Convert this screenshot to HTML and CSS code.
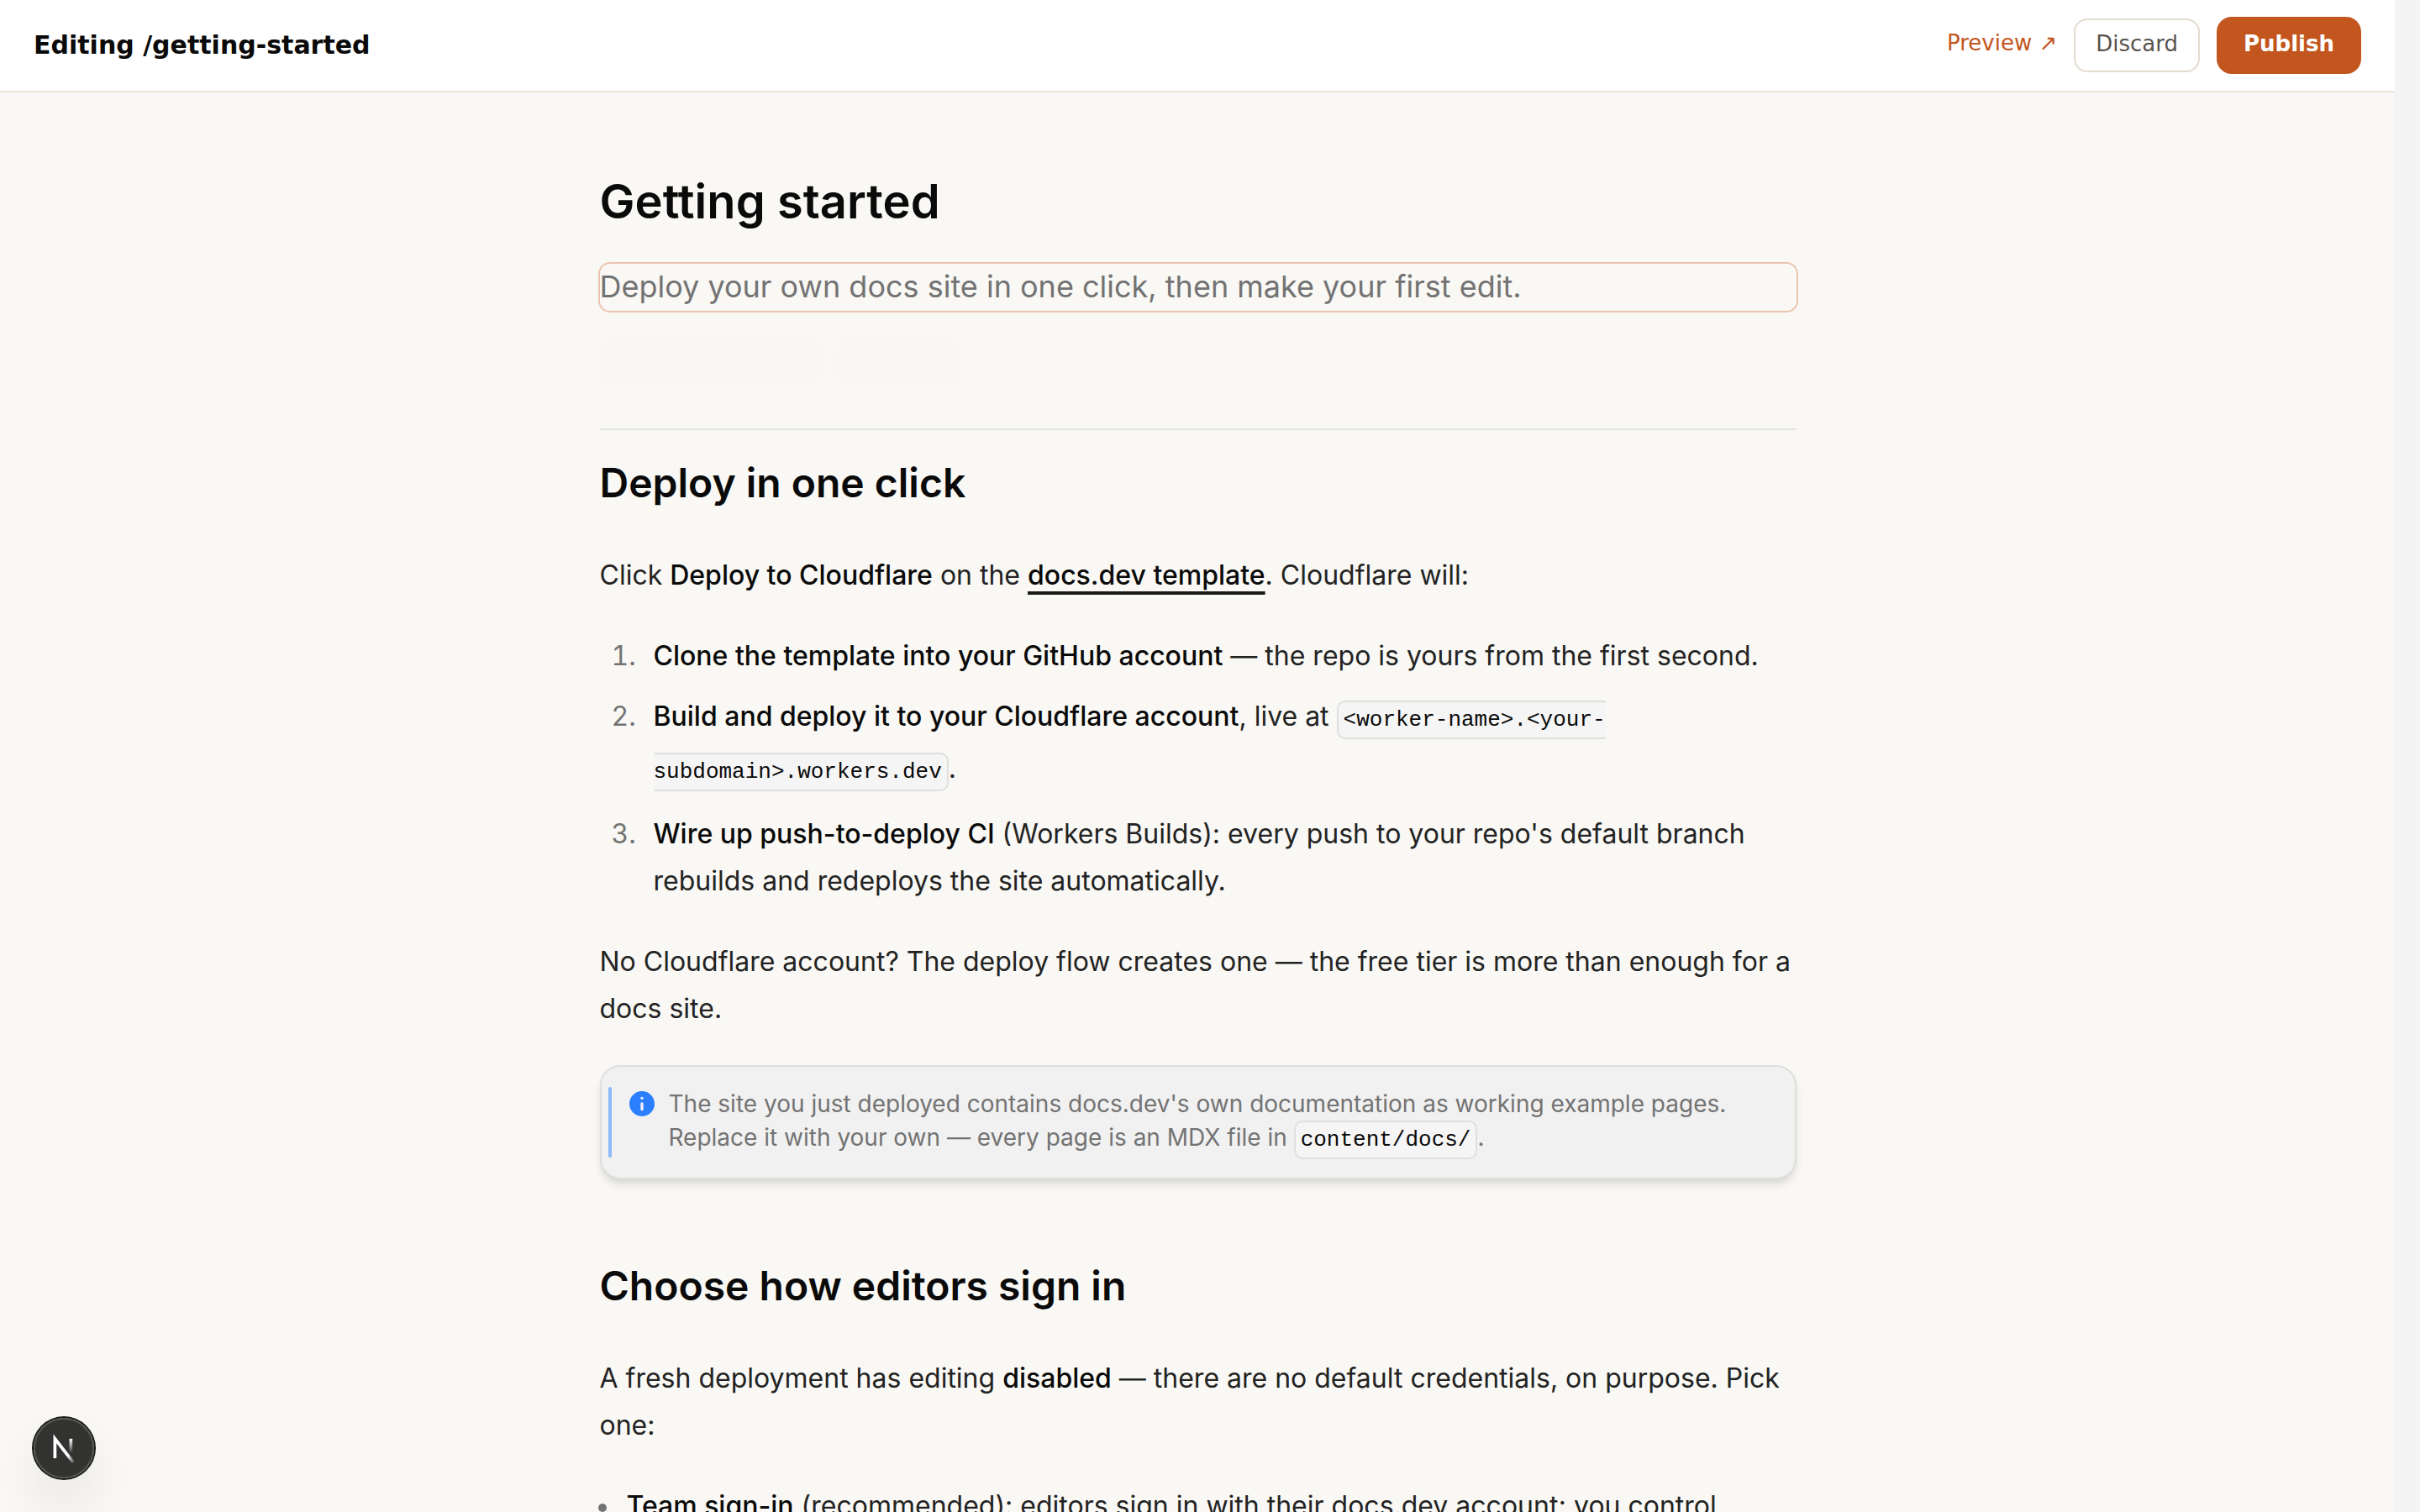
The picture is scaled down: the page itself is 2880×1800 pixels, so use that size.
FILE: index.html
```html
<!DOCTYPE html>
<html lang="en">
<head>
<meta charset="utf-8">
<title>Editing /getting-started</title>
<link rel="stylesheet" href="styles.css">
</head>
<body>
<div class="app">
  <div class="page">
    <header class="topbar">
      <div class="topbar-title">Editing /getting-started</div>
      <div class="topbar-actions">
        <a class="preview">Preview ↗</a>
        <button class="btn btn-discard">Discard</button>
        <button class="btn btn-publish">Publish</button>
      </div>
    </header>
    <main class="content">
      <h1>Getting started</h1>
      <p class="description">Deploy your own docs site in one click, then make your first edit.</p>
      <div class="placeholders">
        <div class="placeholder placeholder-wide"></div>
        <div class="placeholder placeholder-narrow"></div>
      </div>
      <article class="prose">
        <h2>Deploy in one click</h2>
        <p>Click <strong>Deploy to Cloudflare</strong> on the <a class="link">docs.dev template</a>. Cloudflare will:</p>
        <ol>
          <li><strong>Clone the template into your GitHub account</strong> — the repo is yours from the first second.</li>
          <li><strong>Build and deploy it to your Cloudflare account</strong>, live at <code>&lt;worker-name&gt;.&lt;your-<wbr>subdomain&gt;.workers.dev</code>.</li>
          <li><strong>Wire up push-to-deploy CI</strong> (Workers Builds): every push to your repo's default branch rebuilds and redeploys the site automatically.</li>
        </ol>
        <p>No Cloudflare account? The deploy flow creates one — the free tier is more than enough for a docs site.</p>
        <div class="callout">
          <div class="callout-bar"></div>
          <svg class="callout-icon" viewBox="0 0 24 24" fill="none" stroke="#f1f1f1" stroke-width="2" stroke-linecap="round" stroke-linejoin="round">
            <circle cx="12" cy="12" r="10" fill="#2b7fff"/>
            <path d="M12 16v-4"/>
            <path d="M12 8h.01"/>
          </svg>
          <div class="callout-text">The site you just deployed contains docs.dev's own documentation as working example pages. Replace it with your own — every page is an MDX file in <code>content/docs/</code>.</div>
        </div>
        <h2 class="next">Choose how editors sign in</h2>
        <p>A fresh deployment has editing <strong>disabled</strong> — there are no default credentials, on purpose. Pick one:</p>
        <ul>
          <li><strong>Team sign-in</strong> (recommended): editors sign in with their docs.dev account; you control</li>
        </ul>
      </article>
    </main>
  </div>
  <div class="scroll-track"></div>
</div>
<div class="dev-badge">
  <svg class="dev-logo" viewBox="0 0 36 36" fill="none">
    <defs>
      <linearGradient id="diag" gradientUnits="userSpaceOnUse" x1="9.95" y1="11.1" x2="14.2" y2="16.2">
        <stop stop-color="#fff"/><stop offset=".75" stop-color="#fff" stop-opacity=".2"/><stop offset="1" stop-color="#fff" stop-opacity="0"/>
      </linearGradient>
      <linearGradient id="stem" gradientUnits="userSpaceOnUse" x1="11.8" y1="1" x2="11.8" y2="9.6">
        <stop stop-color="#fff"/><stop offset="1" stop-color="#fff" stop-opacity="0"/>
      </linearGradient>
    </defs>
    <g transform="translate(10.35 11.4)">
      <path d="M13.3 15.2 2.34 1v11.6" stroke="url(#diag)" stroke-width="1.86"/>
      <path d="M11.825 1v12" stroke="url(#stem)" stroke-width="1.86"/>
    </g>
  </svg>
</div>
</body>
</html>
```
FILE: styles.css
```css
* {
  box-sizing: border-box;
}

body {
  margin: 0;
  height: 1800px;
  overflow: hidden;
  background: #f9f8f4;
  color: #232323;
  font: 32px/56px Inter, sans-serif;
}

.app {
  display: flex;
  height: 1800px;
  overflow: hidden;
}

.page {
  flex: 1;
  min-width: 0;
}

.scroll-track {
  width: 30px;
  background: #f4f4f4;
}

.topbar {
  display: flex;
  align-items: center;
  justify-content: space-between;
  height: 110px;
  padding: 0 40px;
  background: #fff;
  border-bottom: 2px solid #ebe5dc;
  font-family: "DejaVu Sans", sans-serif;
}

.topbar-title {
  color: #0a0a0a;
  font-size: 30px;
  font-weight: 700;
  line-height: 36px;
}

.topbar-actions {
  display: flex;
  align-items: center;
  gap: 20px;
  font-size: 26px;
  line-height: 30px;
}

.preview {
  padding-bottom: 6px;
  color: #c2561e;
}

.btn {
  margin: 0;
  font: inherit;
}

.btn-discard {
  height: 64px;
  padding: 0 24px 5px;
  background: #fff;
  border: 2px solid #e2dbcf;
  border-radius: 16px;
  color: #57534e;
}

.btn-publish {
  height: 68px;
  padding: 0 32px 5px;
  background: #c2561e;
  border: 0;
  border-radius: 18px;
  color: #fff;
  font-weight: 700;
}

.content {
  width: 1424px;
  margin: 0 0 0 713.5px;
  padding-top: 98px;
}

h1 {
  margin: 0 0 42px;
  color: #0a0a0a;
  font-size: 56px;
  font-weight: 600;
  letter-spacing: 0.06px;
  line-height: 64px;
}

.description {
  margin: 0;
  padding-bottom: 2px;
  border-radius: 12px;
  outline: 2px solid #ecc5b1;
  color: #737373;
  font-size: 36px;
  line-height: 54px;
}

.placeholders {
  display: flex;
  gap: 16px;
  padding: 32px 0 48px;
  border-bottom: 2px solid #e3e3e1;
}

.placeholder {
  height: 60px;
  border-radius: 16px;
  background: #f8f7f5;
}

.placeholder-wide {
  width: 264px;
}

.placeholder-narrow {
  width: 148px;
}

.prose {
  padding-top: 31px;
}

.prose h2 {
  margin: 0 0 50px;
  color: #0a0a0a;
  font-size: 48px;
  font-weight: 600;
  line-height: 64px;
}

.prose h2.next {
  margin-top: 95px;
}

.prose p {
  margin: 0 0 40px;
}

strong,
.link {
  color: #0a0a0a;
  font-weight: 500;
}

.link {
  text-decoration: underline 4px #1a1a18;
  text-decoration-skip-ink: none;
  text-underline-offset: 8px;
}

.prose ol,
.prose ul {
  margin: 0 0 40px;
}

.prose ol {
  padding-left: 52px;
}

.prose ol li {
  margin-top: 16px;
  padding-left: 12px;
}

.prose ol li:first-child {
  margin-top: 0;
}

.prose ol li::marker {
  color: #737373;
}

.prose ul {
  padding-left: 32px;
  list-style: none;
}

.prose ul li {
  white-space: nowrap;
}

.prose ul li::before {
  content: "";
  display: inline-block;
  width: 10px;
  height: 10px;
  margin: 0 24px 4px -34px;
  border-radius: 50%;
  background: #737373;
}

code {
  padding: 6px;
  background: #f5f5f5;
  border: 2px solid #dfdfdf;
  border-radius: 10px;
  color: #0a0a0a;
  font-family: "Liberation Mono", monospace;
  font-size: 26px;
  line-height: 60px;
}

.callout {
  display: flex;
  gap: 16px;
  margin-top: -1px;
  padding: 24px 24px 24px 8px;
  background: #f1f1f1;
  border: 2px solid #dedede;
  border-radius: 24px;
  box-shadow: 0 8px 12px -2px rgba(0, 0, 0, 0.1), 0 4px 8px -4px rgba(0, 0, 0, 0.1);
  color: #737373;
  font-size: 28px;
  line-height: 40px;
}

.callout code {
  line-height: 42px;
}

.callout-bar {
  width: 4px;
  border-radius: 2px;
  background: #8eb9fb;
}

.callout-icon {
  flex: none;
  width: 40px;
  height: 40px;
  margin-right: -4px;
}

.callout-text {
  flex: 1;
}

.dev-badge {
  position: fixed;
  left: 40px;
  bottom: 40px;
  width: 72px;
  height: 72px;
  border-radius: 50%;
  background: rgba(0, 0, 0, 0.8);
  box-shadow: 0 0 0 2px #171717, inset 0 0 0 2px rgba(255, 255, 255, 0.14), 0 32px 64px -16px rgba(0, 0, 0, 0.24);
}

.dev-logo {
  display: block;
  width: 72px;
  height: 72px;
}
```
